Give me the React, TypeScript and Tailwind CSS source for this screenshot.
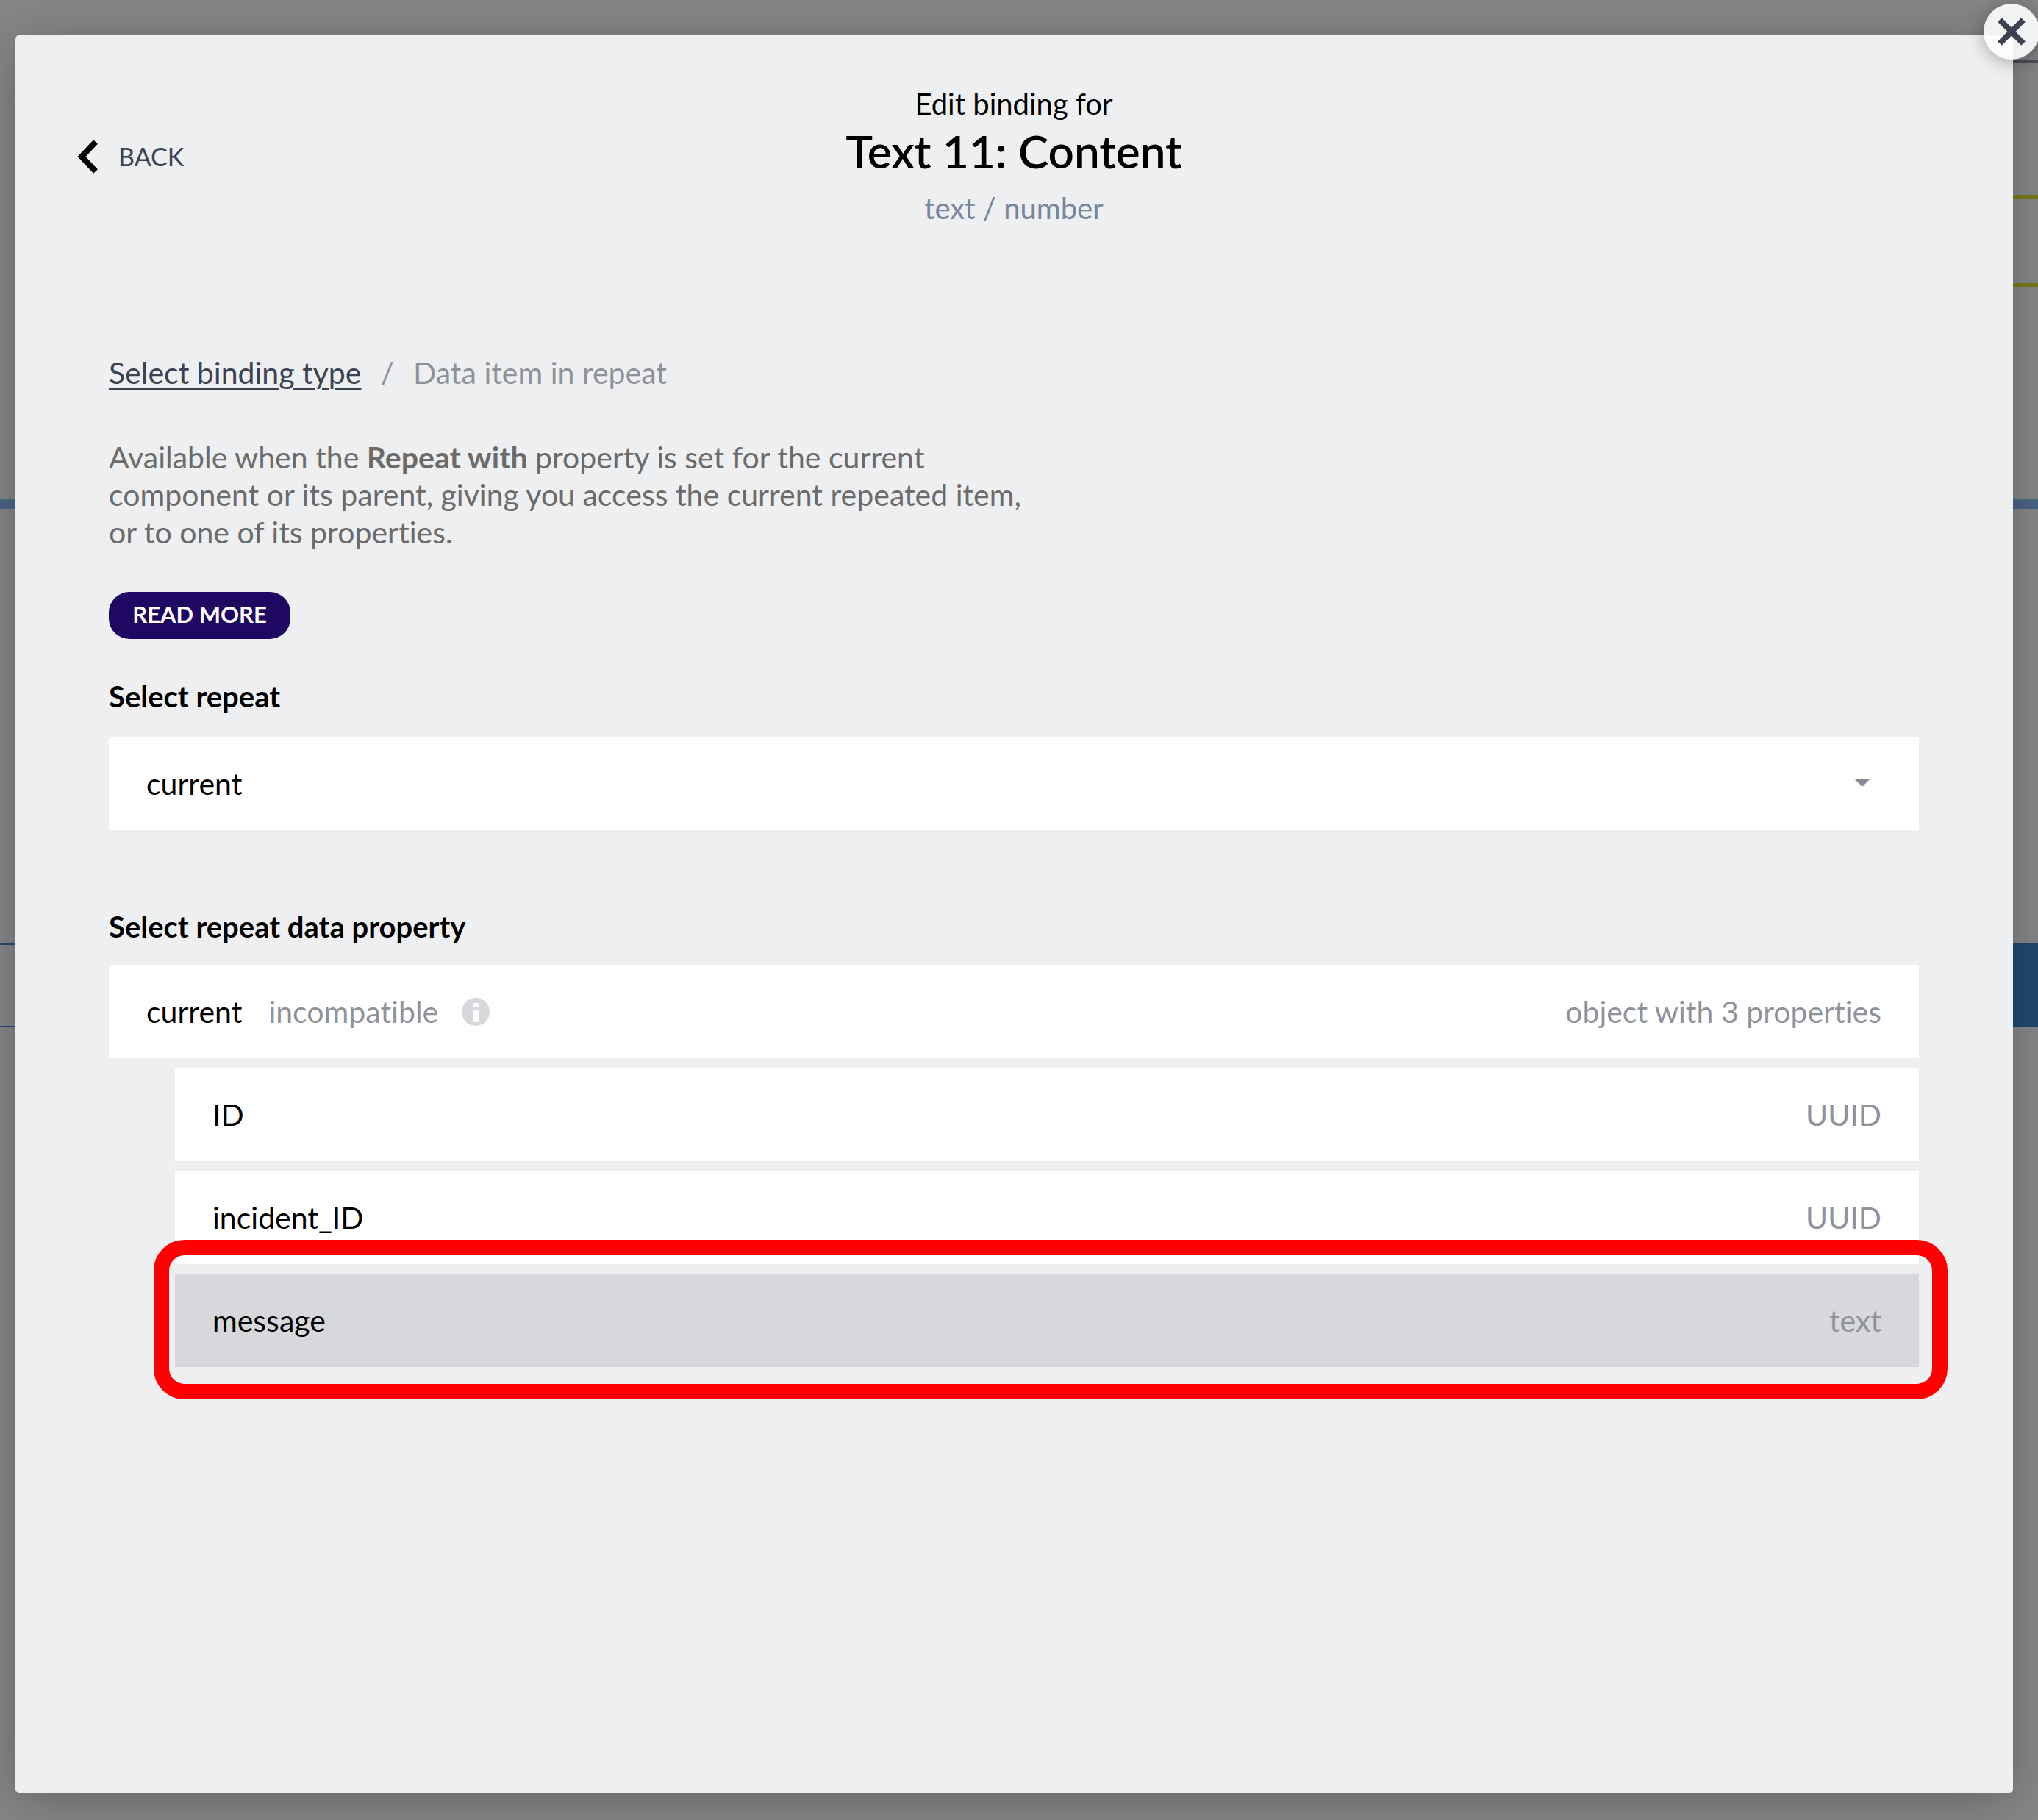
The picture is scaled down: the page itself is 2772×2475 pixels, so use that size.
import React from "react";

type Property = { name: string; type: string; selected?: boolean };

const properties: Property[] = [
  { name: "ID", type: "UUID" },
  { name: "incident_ID", type: "UUID" },
  { name: "message", type: "text", selected: true },
];

function Canvas() {
  return (
    <div aria-hidden="true" className="absolute inset-0 flex justify-between">
      <div className="flex w-10 flex-col">
        <div className="mt-[679px] h-[13px] border-t-2 border-[#466f7c] bg-[#4b6487]" />
        <div className="mt-[591px] h-[114px] border-y-2 border-[#234b78]" />
      </div>
      <div className="flex w-10 flex-col">
        <div className="mt-[82px] h-[3px] bg-[#50535b]" />
        <div className="mt-[180px] h-[125px] border-y-[5px] border-[#7c7a1b]" />
        <div className="mt-[289px] h-[13px] border-t-2 border-[#466f7c] bg-[#4b6487]" />
        <div className="mt-[591px] h-[114px] bg-[#21486f]" />
      </div>
    </div>
  );
}

function CloseButton() {
  return (
    <button
      type="button"
      aria-label="Close"
      className="absolute -right-9 -top-[43px] flex size-[76px] items-center justify-center rounded-full bg-white/90 shadow-[0_4px_24px_rgba(0,0,0,0.3)]"
    >
      <svg viewBox="0 0 38 38" className="size-[38px]" fill="none" stroke="#3c4252" strokeWidth="8">
        <path d="M3 3 35 35M35 3 3 35" />
      </svg>
    </button>
  );
}

function InfoIcon() {
  return (
    <svg viewBox="0 0 38 38" className="size-[38px]" aria-label="Info">
      <circle cx="19" cy="19" r="19" fill="#d7d8dc" />
      <rect x="15" y="7" width="8" height="6" rx="2" fill="#fff" />
      <rect x="15" y="16" width="8" height="17" rx="2" fill="#fff" />
    </svg>
  );
}

export default function App() {
  return (
    <div className="relative flex min-h-screen flex-col overflow-hidden bg-[#858688] pb-[37px] pl-[21px] pr-[34px] pt-12 font-['Lato',sans-serif] text-[41px] leading-[50px] text-black [font-variant-ligatures:none]">
      <Canvas />
      <main className="relative flex-1 rounded-[5px] bg-[#eeeff1] pl-[127px] pr-32 shadow-[0_10px_70px_rgba(0,0,0,0.25)]">
        <CloseButton />

        <header className="grid grid-cols-[1fr_auto_1fr] items-start pt-[68px]">
          <button
            type="button"
            className="-ml-[43px] mt-[72px] flex items-center gap-7 justify-self-start text-[34px] leading-[50px] text-[#3c4252]"
          >
            <svg viewBox="0 0 28 46" className="h-[46px] w-7" fill="none" stroke="#000" strokeWidth="8">
              <path d="M25 3 6 23l19 20" />
            </svg>
            BACK
          </button>
          <div className="text-center text-[40px]">
            <p>Edit binding for</p>
            <h1 className="text-[62px] font-semibold leading-[78px]">Text 11: Content</h1>
            <p className="mt-[14px] text-[#77859f]">text / number</p>
          </div>
        </header>

        <nav aria-label="Breadcrumb" className="mt-[174px] flex gap-[26px] text-[#8f929b]">
          <a href="#binding-type" className="text-[#3c4252] underline decoration-[3px] underline-offset-[5px]">
            Select binding type
          </a>
          <span>/</span>
          <span>Data item in repeat</span>
        </nav>

        <p className="mt-16 max-w-[1300px] leading-[51px] text-[#6b6b6b]">
          Available when the <strong className="font-bold">Repeat with</strong> property is set for the current
          <br />
          component or its parent, giving you access the current repeated item,
          <br />
          or to one of its properties.
        </p>

        <button
          type="button"
          className="mt-[56px] flex h-16 w-[247px] items-center justify-center rounded-[28px] bg-[#1e0861] pb-1 text-[31px] font-bold leading-10 text-white"
        >
          READ MORE
        </button>

        <label htmlFor="repeat" className="mt-[53px] block text-[40px] font-bold">
          Select repeat
        </label>
        <div className="relative mt-[30px]">
          <select
            id="repeat"
            defaultValue="current"
            className="block h-[127px] w-full appearance-none rounded-none bg-white px-[51px]"
          >
            <option value="current">current</option>
          </select>
          <svg
            viewBox="0 0 20 10"
            className="pointer-events-none absolute right-[67px] top-[58px] h-[10px] w-5"
            fill="#868a96"
          >
            <path d="M0 0h20L10 10z" />
          </svg>
        </div>

        <h2 className="mt-[106px] text-[40px] font-bold">Select repeat data property</h2>
        <div className="mt-[27px] flex h-[127px] items-center bg-white px-[51px]">
          <span>current</span>
          <span className="ml-9 text-[#8f929b]">incompatible</span>
          <span className="ml-8">
            <InfoIcon />
          </span>
          <span className="ml-auto text-[#8f929b]">object with 3 properties</span>
        </div>
        <ul className="ml-[90px] mt-[13px] flex flex-col gap-[13px]">
          {properties.map((property) => (
            <li key={property.name} className="relative">
              <button
                type="button"
                className={
                  property.selected
                    ? "flex h-[127px] w-full items-center justify-between bg-[#d7d8dc] px-[51px]"
                    : "flex h-[127px] w-full items-center justify-between bg-white px-[51px]"
                }
              >
                <span>{property.name}</span>
                <span className="text-[#8f929b]">{property.type}</span>
              </button>
              {property.selected && (
                <div className="pointer-events-none absolute -bottom-11 -left-[29px] -right-[39px] -top-[46px] rounded-[42px] border-[21px] border-[#ff0000]" />
              )}
            </li>
          ))}
        </ul>
      </main>
    </div>
  );
}
